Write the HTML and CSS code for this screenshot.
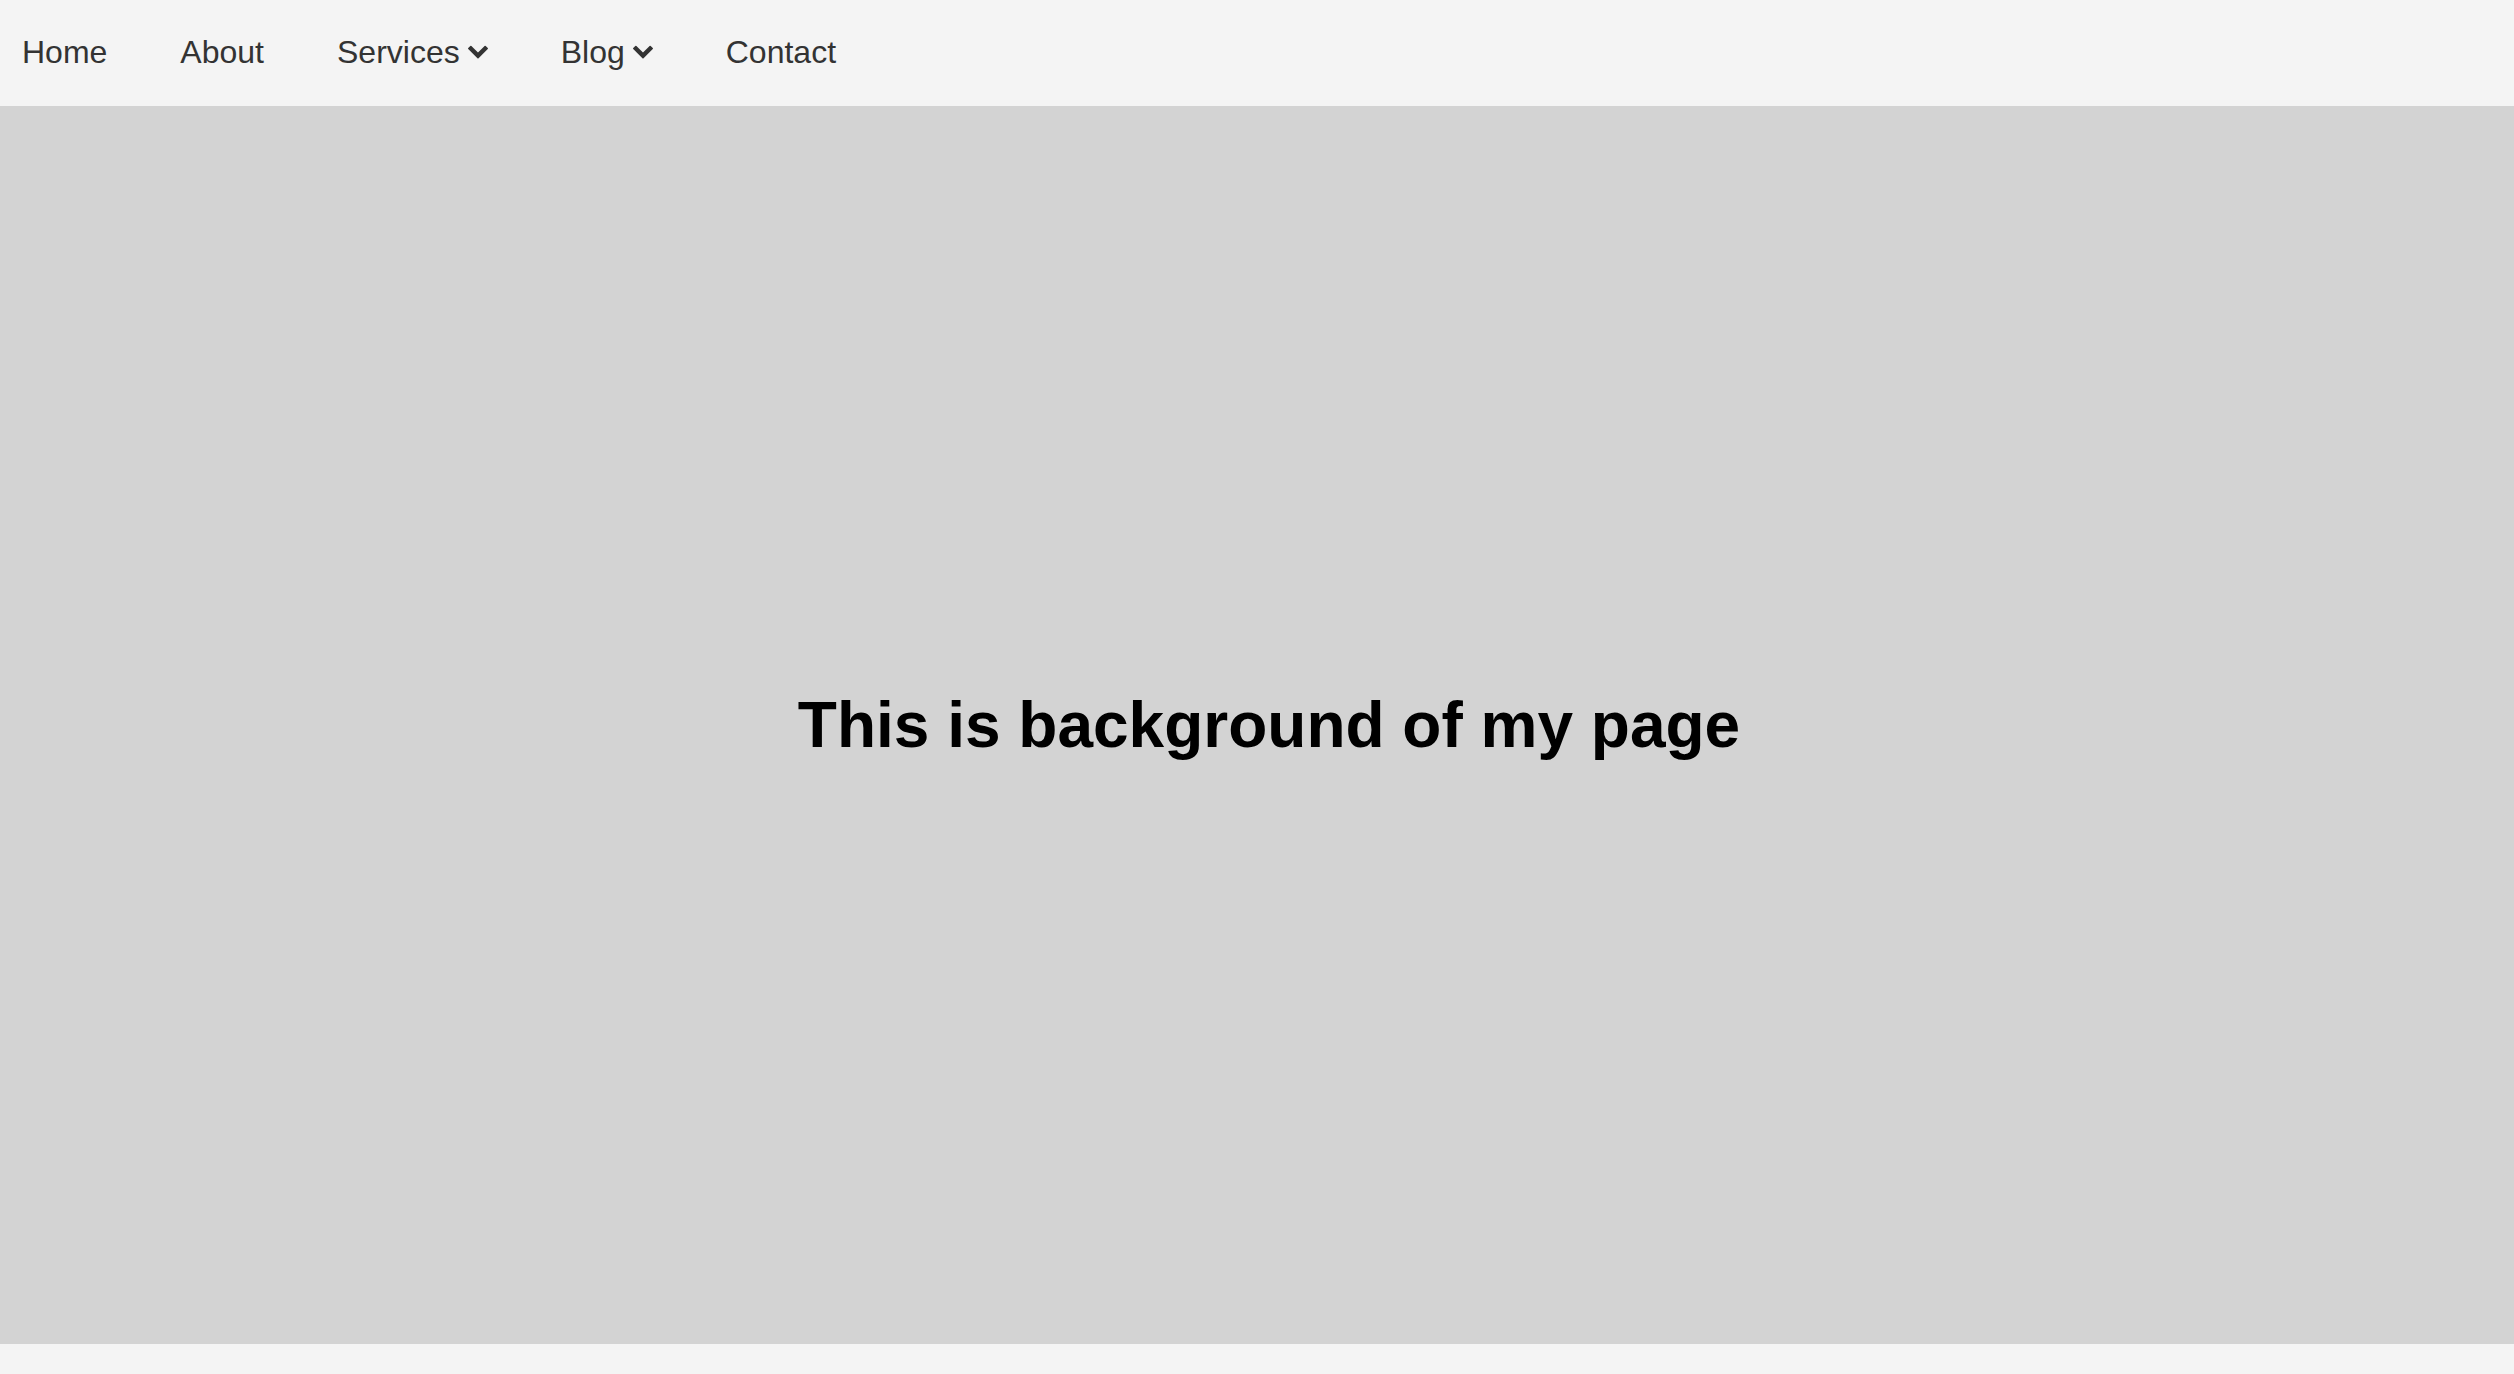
FILE: index.html
```html
<!DOCTYPE html>
<html lang="en">
<head>
<meta charset="utf-8">
<title>Background</title>
<link rel="stylesheet" href="styles.css">
</head>
<body>
<nav class="nav">
  <a class="nav-link" href="#">Home</a>
  <a class="nav-link" href="#">About</a>
  <a class="nav-link" href="#">Services <svg class="chev" viewBox="90 500 1612 1080" aria-hidden="true"><path d="M1683 808l-742 741q-19 19-45 19t-45-19l-742-741q-19-19-19-45.5t19-45.5l166-165q19-19 45-19t45 19l531 531 531-531q19-19 45-19t45 19l166 165q19 19 19 45.5t-19 45.5z"/></svg></a>
  <a class="nav-link" href="#">Blog <svg class="chev" viewBox="90 500 1612 1080" aria-hidden="true"><path d="M1683 808l-742 741q-19 19-45 19t-45-19l-742-741q-19-19-19-45.5t19-45.5l166-165q19-19 45-19t45 19l531 531 531-531q19-19 45-19t45 19l166 165q19 19 19 45.5t-19 45.5z"/></svg></a>
  <a class="nav-link" href="#">Contact</a>
</nav>
<section class="hero">
  <h1 class="hero-title">This is background of my page</h1>
</section>
</body>
</html>
```
FILE: styles.css
```css
html, body {
  margin: 0;
  padding: 0;
}
body {
  background: #f4f4f4;
  font-family: "Liberation Sans", Arial, sans-serif;
  min-height: 1374px;
}
.nav {
  height: 106px;
  display: flex;
  align-items: center;
  gap: 29px;
  padding: 0 0 3px 0;
  box-sizing: border-box;
  background: #f4f4f4;
}
.nav-link {
  display: flex;
  align-items: center;
  gap: 8px;
  padding: 0 22px;
  font-size: 32px;
  color: #333333;
  text-decoration: none;
  line-height: 1;
}
.chev {
  width: 20px;
  height: 14px;
  fill: #333333;
  margin-top: 1px;
}
.hero {
  height: 1238px;
  background: #d3d3d3;
  display: flex;
  align-items: center;
  justify-content: center;
  padding-left: 24px;
  box-sizing: border-box;
}
.hero-title {
  margin: 0;
  font-size: 64px;
  font-weight: 700;
  color: #000;
}
```
